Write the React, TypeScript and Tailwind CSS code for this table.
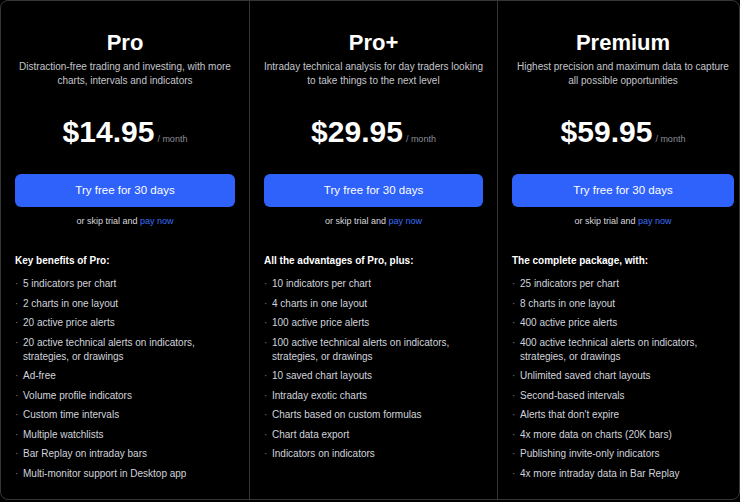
import React from "react";

type Plan = {
  name: string;
  desc: string[];
  price: string;
  heading: string;
  items: string[][];
  width: string;
  border: boolean;
};

const plans: Plan[] = [
  {
    name: "Pro",
    desc: ["Distraction-free trading and investing, with more", "charts, intervals and indicators"],
    price: "$14.95",
    heading: "Key benefits of Pro:",
    items: [
      ["5 indicators per chart"],
      ["2 charts in one layout"],
      ["20 active price alerts"],
      ["20 active technical alerts on indicators,", "strategies, or drawings"],
      ["Ad-free"],
      ["Volume profile indicators"],
      ["Custom time intervals"],
      ["Multiple watchlists"],
      ["Bar Replay on intraday bars"],
      ["Multi-monitor support in Desktop app"],
    ],
    width: "w-[248px]",
    border: false,
  },
  {
    name: "Pro+",
    desc: ["Intraday technical analysis for day traders looking", "to take things to the next level"],
    price: "$29.95",
    heading: "All the advantages of Pro, plus:",
    items: [
      ["10 indicators per chart"],
      ["4 charts in one layout"],
      ["100 active price alerts"],
      ["100 active technical alerts on indicators,", "strategies, or drawings"],
      ["10 saved chart layouts"],
      ["Intraday exotic charts"],
      ["Charts based on custom formulas"],
      ["Chart data export"],
      ["Indicators on indicators"],
    ],
    width: "w-[248px]",
    border: true,
  },
  {
    name: "Premium",
    desc: ["Highest precision and maximum data to capture", "all possible opportunities"],
    price: "$59.95",
    heading: "The complete package, with:",
    items: [
      ["25 indicators per chart"],
      ["8 charts in one layout"],
      ["400 active price alerts"],
      ["400 active technical alerts on indicators,", "strategies, or drawings"],
      ["Unlimited saved chart layouts"],
      ["Second-based intervals"],
      ["Alerts that don't expire"],
      ["4x more data on charts (20K bars)"],
      ["Publishing invite-only indicators"],
      ["4x more intraday data in Bar Replay"],
    ],
    width: "w-[251px]",
    border: true,
  },
];

function Column({ p }: { p: Plan }) {
  return (
    <div
      className={`${p.width} shrink-0 h-full flex flex-col px-[14px] pt-[28px] ${
        p.border ? "border-l border-[#363636]" : ""
      }`}
    >
      <div className="text-center text-white font-bold text-[22px] leading-[28px]">{p.name}</div>
      <div className="mt-[3px] text-center text-[#c4c6cc] text-[10px] leading-[14px]">
        {p.desc.map((d, i) => (
          <div key={i} className="whitespace-nowrap">{d}</div>
        ))}
      </div>
      <div className="mt-[26px] flex items-baseline justify-center gap-[3px] h-[36px]">
        <span className="text-white font-bold text-[30px] leading-[36px]">{p.price}</span>
        <span className="text-[#8a8d96] text-[9px]">/ month</span>
      </div>
      <button className="mt-[24px] h-[33px] w-full rounded-[6px] bg-[#2e62fb] text-white text-[11.5px] font-medium">
        Try free for 30 days
      </button>
      <div className="mt-[8px] text-center text-[9px] leading-[12px] text-[#d6d8de]">
        or skip trial and <span className="text-[#3a6cf6]">pay now</span>
      </div>
      <div className="mt-[27px] text-white font-bold text-[10px] leading-[14px]">{p.heading}</div>
      <ul className="mt-[9px] flex flex-col gap-[5.5px]">
        {p.items.map((it, i) => (
          <li key={i} className="flex text-[10px] leading-[14px] text-[#d1d4dc]">
            <span className="w-[8px] shrink-0 text-[#7a7d86]">·</span>
            <span>
              {it.map((l, j) => (
                <div key={j} className="whitespace-nowrap">{l}</div>
              ))}
            </span>
          </li>
        ))}
      </ul>
    </div>
  );
}

export default function App() {
  return (
    <div
      className="w-[740px] h-[502px] bg-black"
      style={{ fontFamily: '"Liberation Sans", Arial, sans-serif' }}
    >
      <div className="w-[740px] h-[500px] flex overflow-hidden border border-[#363636] rounded-[8px] bg-black">
        {plans.map((p) => (
          <Column key={p.name} p={p} />
        ))}
      </div>
    </div>
  );
}
